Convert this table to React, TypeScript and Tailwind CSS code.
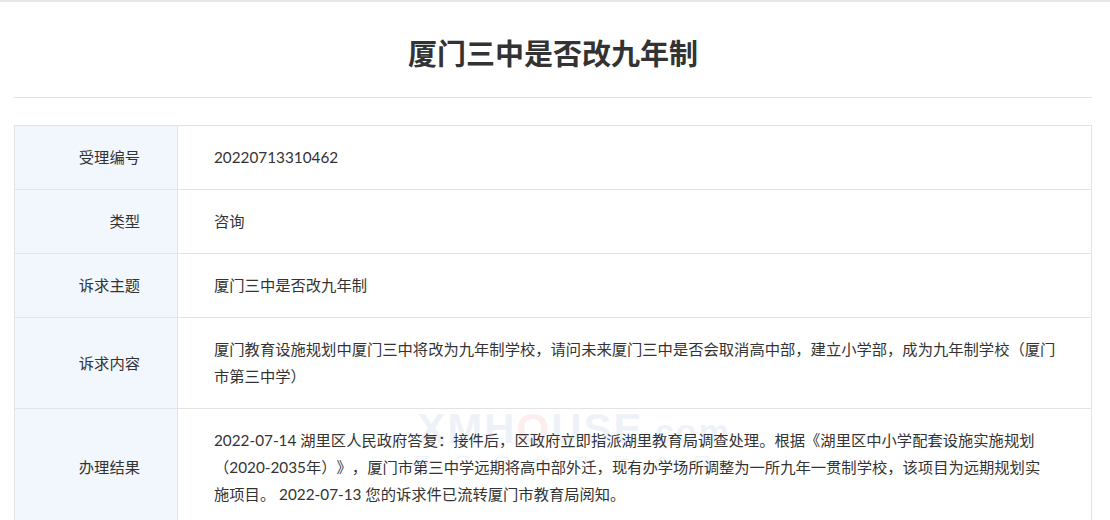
import React from "react";

const rows: { label: string; value: React.ReactNode }[] = [
  { label: "受理编号", value: "20220713310462" },
  { label: "类型", value: "咨询" },
  { label: "诉求主题", value: "厦门三中是否改九年制" },
  {
    label: "诉求内容",
    value:
      "厦门教育设施规划中厦门三中将改为九年制学校，请问未来厦门三中是否会取消高中部，建立小学部，成为九年制学校（厦门市第三中学）",
  },
  {
    label: "办理结果",
    value: (
      <>
        2022-07-14 湖里区人民政府答复：接件后，区政府立即指派湖里教育局调查处理。根据《湖里区中小学配套设施实施规划（2020-2035年）》，厦门市第三中学远期将高中部外迁，现有办学场所调整为一所九年一贯制学校，该项目为远期规划实
        <br />
        施项目。 2022-07-13 您的诉求件已流转厦门市教育局阅知。
      </>
    ),
  },
];

export default function App() {
  return (
    <div
      className="relative w-[1110px] h-[520px] overflow-hidden bg-white text-[#333] [text-spacing-trim:space-all]"
      style={{ fontFamily: 'Lato, "Noto Sans CJK SC", sans-serif' }}
    >
      <div className="h-[2px] bg-[#e6e6e6]" />
      <div
        className="mx-[14px] w-[1078px] border-b border-[#e3e3e3] pt-[32px] pb-[27px] text-center text-[29px] font-bold leading-[36px] text-[#333]"
        style={{ fontFamily: '"Noto Sans CJK SC", sans-serif' }}
      >
        厦门三中是否改九年制
      </div>
      <div className="mx-[14px] mt-[27px] w-[1078px] border-t border-l border-r border-[#e3e3e3]">
        {rows.map((r) => (
          <div key={r.label} className="flex border-b border-[#e3e3e3]">
            <div className="flex w-[163px] shrink-0 items-center justify-end border-r border-[#e3e3e3] bg-[#f2f7fd] pr-[37px] text-[15.3px] leading-[27px]">
              {r.label}
            </div>
            <div className="flex-1 py-[18px] pl-[36px] pr-[30px] text-[15.3px] leading-[27px]">
              {r.value}
            </div>
          </div>
        ))}
      </div>
      <div className="pointer-events-none absolute left-[414px] top-[408px] flex flex-col items-center opacity-[0.07]">
        <div
          className="text-[42px] font-black leading-[42px] tracking-[2px] text-[#1e5aa8]"
          style={{ fontFamily: '"Liberation Sans", sans-serif' }}
        >
          XMH<span className="text-[#d22]">O</span>USE<span className="text-[34px]">.com</span>
        </div>
        <div className="mt-[2px] text-[16px] leading-[18px] tracking-[24px] text-[#1e5aa8]">厦门房地产联合网</div>
      </div>
    </div>
  );
}
